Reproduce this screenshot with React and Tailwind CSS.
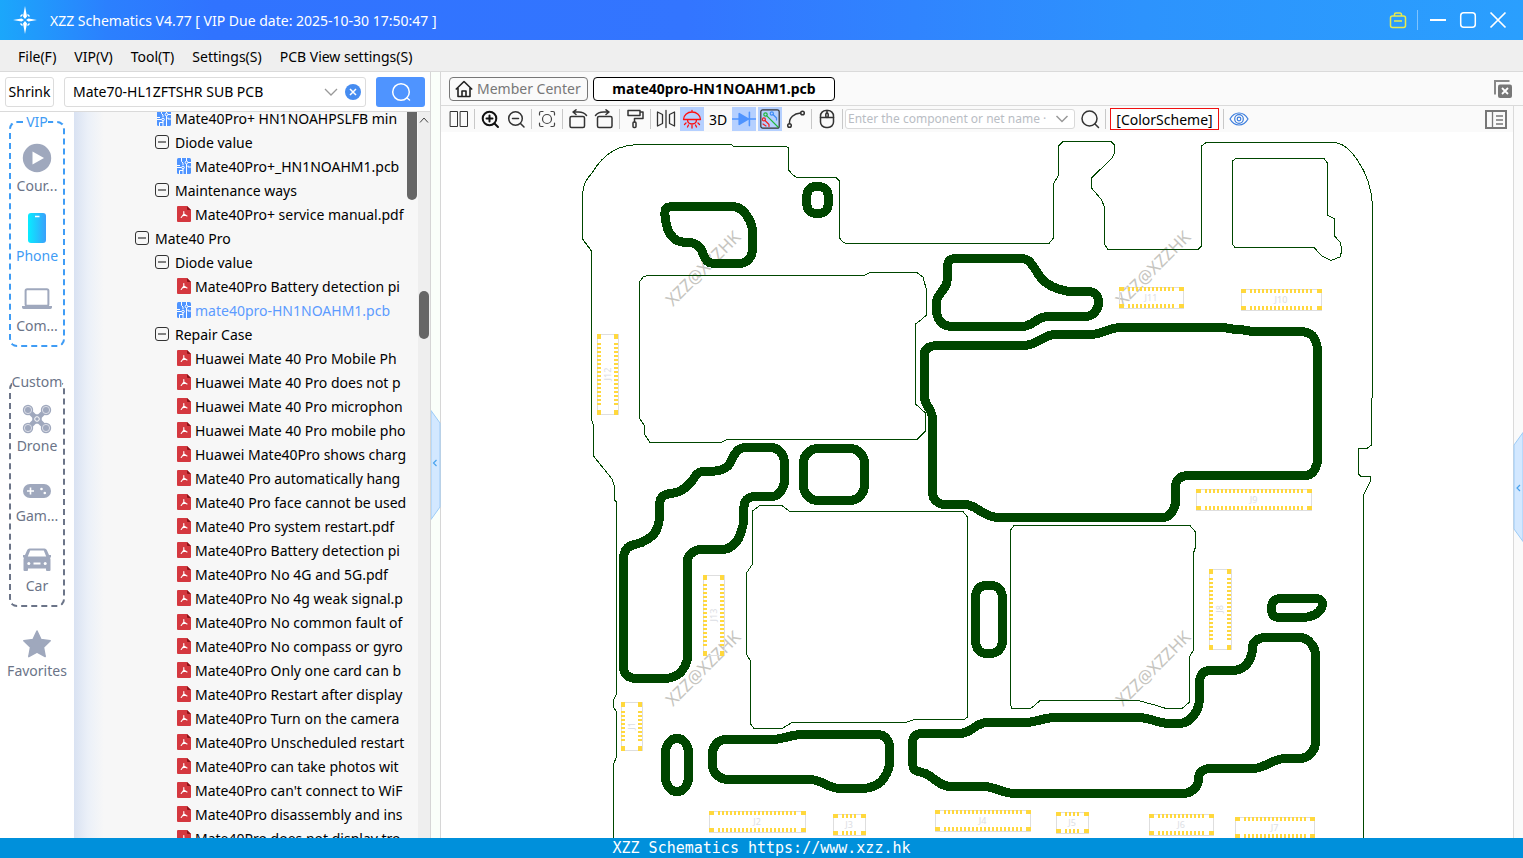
import React from "react";

const PCB_GREEN = "#004600";

const treeRows = [
  { kind: "pcb", level: 1, label: "Mate40Pro+ HN1NOAHPSLFB min" },
  { kind: "folder", level: 2, label: "Diode value" },
  { kind: "pcb", level: 3, label: "Mate40Pro+_HN1NOAHM1.pcb" },
  { kind: "folder", level: 2, label: "Maintenance ways" },
  { kind: "pdf", level: 3, label: "Mate40Pro+ service manual.pdf" },
  { kind: "folder", level: 1, label: "Mate40 Pro" },
  { kind: "folder", level: 2, label: "Diode value" },
  { kind: "pdf", level: 3, label: "Mate40Pro Battery detection pi" },
  { kind: "pcb", level: 3, label: "mate40pro-HN1NOAHM1.pcb", active: true },
  { kind: "folder", level: 2, label: "Repair Case" },
  { kind: "pdf", level: 3, label: "Huawei Mate 40 Pro Mobile Ph" },
  { kind: "pdf", level: 3, label: "Huawei Mate 40 Pro does not p" },
  { kind: "pdf", level: 3, label: "Huawei Mate 40 Pro microphon" },
  { kind: "pdf", level: 3, label: "Huawei Mate 40 Pro mobile pho" },
  { kind: "pdf", level: 3, label: "Huawei Mate40Pro shows charg" },
  { kind: "pdf", level: 3, label: "Mate40 Pro automatically hang" },
  { kind: "pdf", level: 3, label: "Mate40 Pro face cannot be used" },
  { kind: "pdf", level: 3, label: "Mate40 Pro system restart.pdf" },
  { kind: "pdf", level: 3, label: "Mate40Pro Battery detection pi" },
  { kind: "pdf", level: 3, label: "Mate40Pro No 4G and 5G.pdf" },
  { kind: "pdf", level: 3, label: "Mate40Pro No 4g weak signal.p" },
  { kind: "pdf", level: 3, label: "Mate40Pro No common fault of" },
  { kind: "pdf", level: 3, label: "Mate40Pro No compass or gyro" },
  { kind: "pdf", level: 3, label: "Mate40Pro Only one card can b" },
  { kind: "pdf", level: 3, label: "Mate40Pro Restart after display" },
  { kind: "pdf", level: 3, label: "Mate40Pro Turn on the camera" },
  { kind: "pdf", level: 3, label: "Mate40Pro Unscheduled restart" },
  { kind: "pdf", level: 3, label: "Mate40Pro can take photos wit" },
  { kind: "pdf", level: 3, label: "Mate40Pro can't connect to WiF" },
  { kind: "pdf", level: 3, label: "Mate40Pro disassembly and ins" },
  { kind: "pdf", level: 3, label: "Mate40Pro does not display tro" },
];

const indent = { "folder-1": "pl-[61px]", "folder-2": "pl-[81px]", "pcb-1": "pl-[83px]", "pcb-3": "pl-[103px]", "pdf-3": "pl-[103px]" };

function PdfIcon() {
  return (
    <svg width="14" height="16" viewBox="0 0 14 16" className="shrink-0">
      <path d="M1 0h9l4 4v11a1 1 0 0 1-1 1H1a1 1 0 0 1-1-1V1a1 1 0 0 1 1-1z" fill="#d4383f" />
      <path d="M10 0l4 4h-3a1 1 0 0 1-1-1z" fill="#8d1218" />
      <path d="M6.800 5.500v2.500L4.200 11.500M6.800 8l3.200 2M5.500 9.800l3.500-.6" fill="none" stroke="#fff" strokeWidth="1.100" strokeLinecap="round" />
    </svg>
  );
}

function PcbIcon() {
  return (
    <svg width="14" height="16" viewBox="0 0 14 16" className="shrink-0">
      <rect width="14" height="16" rx="1.500" fill="#4f94ff" />
      <g fill="none" stroke="#fff" strokeWidth="1">
        <path d="M4.500 0v3.500L6 5v2M0 7.500h3M4.500 9.500H0M6 11v5M9.500 6v10M11 7.500V9l3 0M9.500 0v3M6 12.500H2.500V16" />
        <circle cx="6" cy="9.500" r="1.300" />
        <circle cx="9.500" cy="4.500" r="1.300" />
        <path d="M11 4.500h3" />
      </g>
    </svg>
  );
}

function MinusBox() {
  return (
    <svg width="14" height="14" viewBox="0 0 14 14" className="shrink-0" fill="none" stroke="#333">
      <rect x=".5" y=".5" width="13" height="13" rx="2.500" />
      <path d="M3 7h8" strokeWidth="1.200" />
    </svg>
  );
}

function TreeRow({ row }) {
  const icon = row.kind === "pdf" ? <PdfIcon /> : row.kind === "pcb" ? <PcbIcon /> : <MinusBox />;
  return (
    <li className={`flex h-6 items-center whitespace-nowrap ${row.kind === "folder" ? "gap-[6px]" : "gap-1"} ${indent[`${row.kind}-${row.level}`]} ${row.active ? "text-[#5c9bff]" : "text-black"}`}>
      {icon}
      <span>{row.label}</span>
    </li>
  );
}

const sideIcons = {
  course: (
    <svg width="30" height="30" viewBox="0 0 30 30">
      <circle cx="15" cy="15" r="14.200" fill="#9fa8bd" />
      <path d="M10.500 8.500v13L22 15z" fill="#fff" />
    </svg>
  ),
  phone: (
    <svg width="30" height="30" viewBox="0 0 30 30">
      <defs>
        <linearGradient id="phoneFill" x1="0" y1="0" x2="1" y2="0">
          <stop offset="0" stopColor="#08ecff" />
          <stop offset="1" stopColor="#3aa0fb" />
        </linearGradient>
      </defs>
      <rect x="6" y="0" width="18" height="30" rx="3" fill="url(#phoneFill)" />
      <path d="M13 3.500h4.500" stroke="#fff" strokeWidth="1.500" />
    </svg>
  ),
  computer: (
    <svg width="30" height="30" viewBox="0 0 30 30">
      <rect x="3.600" y="6.300" width="22.800" height="16.500" rx="1.500" fill="none" stroke="#9fa8bd" strokeWidth="2" />
      <path d="M0 23h30v1.500a2 2 0 0 1-2 1.500H2A2 2 0 0 1 0 24.500z" fill="#9fa8bd" />
    </svg>
  ),
  drone: (
    <svg width="30" height="32" viewBox="0 -1 30 32" className="-mb-[2px]">
      <path d="M6 6l18 18M24 6L6 24" stroke="#9fa8bd" strokeWidth="5" />
      {[[6, 6], [24, 6], [6, 24], [24, 24]].map(([x, y]) => (
        <g key={`${x}-${y}`}>
          <circle cx={x} cy={y} r="5.200" fill="#9fa8bd" />
          <circle cx={x} cy={y} r="3.600" fill="none" stroke="#e8eaf0" strokeWidth=".8" />
        </g>
      ))}
      <circle cx="15" cy="15" r="4.800" fill="#9fa8bd" />
      <circle cx="15" cy="15" r="2.300" fill="none" stroke="#fff" strokeWidth="1" />
    </svg>
  ),
  game: (
    <svg width="30" height="30" viewBox="0 -3 30 30">
      <rect x="1" y="8" width="28" height="14" rx="7" fill="#9fa8bd" />
      <path d="M8.500 11.500v7M5 15h7" stroke="#fff" strokeWidth="1.600" />
      <circle cx="19.500" cy="13" r="1.300" fill="#fff" />
      <circle cx="22.800" cy="17" r="1.300" fill="#fff" />
    </svg>
  ),
  car: (
    <svg width="30" height="30" viewBox="0 -2 30 30">
      <path d="M7.500 3.500h15a2.500 2.500 0 0 1 2.300 1.600L27 10h2v2.500h-1l.5 2V25a1 1 0 0 1-1 1h-2.500a1 1 0 0 1-1-1v-1.500H6V25a1 1 0 0 1-1 1H2.500a1 1 0 0 1-1-1V14.500l.5-2H1V10h2l2.200-4.900A2.500 2.500 0 0 1 7.500 3.500z" fill="#9fa8bd" />
      <path d="M8.200 5.500h13.600l2.400 6H5.800z" fill="#fff" />
      <circle cx="6.800" cy="18.500" r="1.500" fill="#fff" />
      <circle cx="23.200" cy="18.500" r="1.500" fill="#fff" />
      <path d="M11.500 18.500h7" stroke="#fff" strokeWidth="2" />
    </svg>
  ),
  star: (
    <svg width="30" height="30" viewBox="0 -1 30 30">
      <path d="M15 2l4 8.600 9.200 1.200-6.700 6.500 1.700 9.300L15 23.200 6.800 27.600l1.700-9.300-6.700-6.500 9.200-1.200z" fill="#9fa8bd" stroke="#9fa8bd" strokeWidth="1.500" strokeLinejoin="round" />
    </svg>
  ),
};

function SideItem({ icon, label, active }) {
  return (
    <button className={`flex h-[70px] w-full flex-col items-center gap-[3px] leading-5 ${active ? "text-[#3f9cf5]" : "text-[#6b7488]"}`}>
      {sideIcons[icon]}
      <span className="whitespace-nowrap">{label}</span>
    </button>
  );
}

function SideGroup({ title, color, children }) {
  return (
    <section className={`relative mx-[9px] h-[226px] rounded-lg border-2 border-dashed pt-[20px] ${color}`}>
      <h2 className="absolute inset-x-0 top-[-11px] flex justify-center leading-5">
        <span className="bg-white">{title}</span>
      </h2>
      {children}
    </section>
  );
}

function Sep() {
  return <span className="mx-[2px] h-5 w-px shrink-0 bg-[#c8c8c8]" />;
}

function Tool({ label, on, children }) {
  return (
    <button aria-label={label} className={`mx-px flex size-6 shrink-0 items-center justify-center ${on ? "bg-[#b5d0ff]" : ""}`}>
      {children}
    </button>
  );
}

function Icon({ children, size = 20, stroke = "#333", width = 1.5 }) {
  return (
    <svg width={size} height={size} viewBox="0 0 20 20" fill="none" stroke={stroke} strokeWidth={width} strokeLinecap="round" strokeLinejoin="round" className="shrink-0">
      {children}
    </svg>
  );
}

function Toolbar() {
  return (
    <div className="flex h-[26px] shrink-0 items-center bg-[#fafafa] pl-[5px]">
      <Tool label="Split view"><Icon width={1}><path d="M1.500 2.500h7v15h-7zM11.500 2.500h7v15h-7z" strokeLinejoin="miter" /></Icon></Tool>
      <Sep />
      <Tool label="Zoom in"><Icon stroke="#111" width={2}><circle cx="9.500" cy="9.500" r="6.800" /><path d="M14.500 14.500l3.500 3.500M6.500 9.500h6M9.500 6.500v6" /></Icon></Tool>
      <Tool label="Zoom out"><Icon><circle cx="9.500" cy="9.500" r="6.800" /><path d="M14.500 14.500l3.500 3.500M6.500 9.500h6" /></Icon></Tool>
      <Sep />
      <Tool label="Fit to window"><Icon width={1.200} stroke="#444"><circle cx="10" cy="10" r="4.500" /><path d="M2.500 6V4a1.500 1.500 0 0 1 1.500-1.500h2M14 2.500h2A1.500 1.500 0 0 1 17.500 4v2M17.500 14v2a1.500 1.500 0 0 1-1.500 1.500h-2M6 17.500H4A1.500 1.500 0 0 1 2.500 16v-2" /></Icon></Tool>
      <Sep />
      <Tool label="Rotate right"><Icon><rect x="2" y="7.500" width="14.500" height="11" rx="1.500" /><path d="M5 3h5.500Q16 3 18.500 6.500M8 .8L5 3 8 5.500" /></Icon></Tool>
      <Tool label="Rotate left"><Icon><rect x="3.500" y="7.500" width="14.500" height="11" rx="1.500" /><path d="M15 3H9.500Q4 3 1.500 6.500M12 .8L15 3l-3 2.500" /></Icon></Tool>
      <Sep />
      <Tool label="Paint"><Icon><path d="M3 1.500h12v5H3zM15 3h3v6.500H9.500v3.500" /><rect x="8" y="13" width="3" height="5.500" rx="1" /></Icon></Tool>
      <Sep />
      <Tool label="Mirror"><Icon width={1.300}><path d="M10 1.500v17M1.500 3v14l5-2.500v-9zM18.500 3v14l-5-2.500v-9z" /></Icon></Tool>
      <Tool label="Lamp" on><Icon stroke="#ff1010" width={1.300}><path d="M1.500 10.500a8.500 7.500 0 0 1 17 0zM10 3V1.500M5.500 10.500c0 3 2 4.500 4.500 4.500s4.500-1.500 4.500-4.500M4 14l-1.500 1.500M6.500 16l-1 2M10 16.500V19M13.500 16l1 2M16 14l1.500 1.500" /></Icon></Tool>
      <button className="mx-px flex h-6 w-6 shrink-0 items-center justify-center">3D</button>
      <Tool label="Diode" on><Icon size={24} stroke="#4f94ff" width={1.300}><path d="M0 10h20" /><path d="M6 5.500v9l7.500-4.500z" fill="#4f94ff" /><path d="M14.500 4.500v11" /></Icon></Tool>
      <Tool label="Net" on>
        <Icon width={1.200}>
          <rect x=".8" y=".8" width="18.400" height="18.400" rx="2" />
          <path d="M6.800 6.800L18 18" stroke="#22b83a" /><circle cx="5.500" cy="5.500" r="1.700" stroke="#22b83a" />
          <path d="M13 5.500l3.500 3.500v2" stroke="#3f8df5" /><circle cx="11.800" cy="4.500" r="1.600" stroke="#3f8df5" />
          <path d="M5 11.500l4 4v2" stroke="#f02020" /><circle cx="3.900" cy="10.400" r="1.500" stroke="#f02020" /><path d="M3 15l3 2" stroke="#f02020" />
        </Icon>
      </Tool>
      <Tool label="Curve"><Icon><circle cx="3.500" cy="16.500" r="1.800" /><circle cx="16.500" cy="4" r="1.800" /><path d="M3.500 14.500C3 8.500 8 4.500 14.500 4" /></Icon></Tool>
      <Sep />
      <Tool label="Mouse"><Icon><rect x="3.500" y="1.500" width="13" height="17" rx="5.500" /><path d="M3.500 8.500h13M10 1.500v3" /><rect x="8.800" y="4" width="2.400" height="4.500" rx="1.200" /></Icon></Tool>
      <Sep />
      <div className="flex h-5 w-[230px] shrink-0 items-center rounded-[3px] border border-[#d9d9d9] bg-white pr-[5px]">
        <input aria-label="Component or net name" placeholder="Enter the component or net name ·" className="min-w-0 flex-1 pl-[2px] text-[12px] outline-none placeholder:text-[#b9bdc4]" />
        <svg width="14" height="8" viewBox="0 0 14 8" fill="none" stroke="#999" strokeWidth="1.500"><path d="M1.500 1L7 6.500 12.500 1" /></svg>
      </div>
      <span className="ml-[2px]"><Tool label="Search"><Icon><circle cx="9.500" cy="9.500" r="7.500" /><path d="M15 15l3.500 3.500" /></Icon></Tool></span>
      <Sep />
      <button className="mx-[2px] flex h-[22px] w-[109px] shrink-0 items-center justify-center border border-[#f01010] bg-white">[ColorScheme]</button>
      <Sep />
      <Tool label="Visibility"><Icon stroke="#3b7ddd" width={1.200}><path d="M1 10c4.500-8 13.500-8 18 0-4.500 8-13.500 8-18 0z" /><circle cx="10" cy="10" r="4.300" /><circle cx="10" cy="10" r="1.800" /></Icon></Tool>
      <button aria-label="Toggle side panel" className="ml-auto mr-[6px]">
        <svg width="22" height="19" viewBox="0 0 22 19" fill="none" stroke="#777">
          <rect x="1" y="1" width="20" height="17" strokeWidth="2" />
          <path d="M7.500 1v17M11 6h7M11 10h7M11 14h7" strokeWidth="1.300" />
        </svg>
      </button>
    </div>
  );
}

const thinPaths = [
  "M613.500 838V764L616.500 757V712L613.500 707V700L616.500 694V502L614.500 500V486L612 479L593.500 456V425L591.500 420V251L582.500 239V195Q583 182 592 173Q601 158 613 151Q624 144.500 642 144.500H731L734 146.500H786L788.500 148V170L793 175L797 177.500H836L839.500 181V238L843 242L846 243.500H1049L1053.500 238V184L1058.500 175V146L1063 141.500H1111L1114.500 145V153L1112 158L1091.500 178V188L1101 199L1104.500 207V244L1108 249.500H1198L1201.500 246V146L1206 142.500H1336Q1348 145 1358 161Q1371 180 1372.500 205V396L1371.500 400V445L1367 448.500L1358.500 448.500V474L1361 476.500H1370L1371 480L1363.500 495V838",
  "M1236 158.500H1324L1327.500 163V215L1334.500 219V236L1340 242L1342 250L1340 257L1331 260.500L1322 256L1314 247.500H1235L1232.500 244V161Z",
  "M639.500 282L643 277L648 275.500H864L870 272.500H917L923 277L926.500 290V315L922 319L915.500 324V404L925.500 413V431L917 439.500H727L721 442.500H650L645 435L644.500 426L639.500 418Z",
  "M752.500 511L760 505.500H782L790 511.500H963L967.500 517V717L964 719.500H914L906 722.500H792L782 728.500H754L750.500 724V661L746.500 654V573L752.500 564Z",
  "M1010.500 530L1014 525.500H1190L1195.500 532V547L1193.500 553V650L1189.500 657V702L1182 708.500H1166L1155 705L1138 700.500H1040L1034 706L1030 708.500H1012L1010.500 705Z",
];

const thickLoops = [
  [[664.5, 210], [668, 206.5], [737, 206.5], [745, 212], [752.5, 226], [752.5, 253], [749, 260], [743, 263.5], [709, 263.5], [704, 257], [701, 248], [694, 242.5], [678, 242], [669, 234], [665.5, 221]],
  [[947.5, 263], [951, 258.5], [1027, 258.5], [1034, 267], [1041, 279], [1052, 287], [1067, 291.5], [1093, 291.5], [1098.5, 297], [1098.5, 308], [1091, 316.5], [1043, 316.5], [1027, 326.5], [947, 326.5], [940, 322], [936.5, 315], [936.5, 300], [939, 295], [946, 286], [947.5, 280]],
  [[924, 350], [932, 345.5], [1027, 345.5], [1035, 343], [1050, 334.5], [1095, 334.5], [1116, 327.5], [1226, 327.5], [1236, 330], [1240, 329], [1250, 331.5], [1305, 331.5], [1313, 335], [1317.5, 345], [1317.5, 465], [1311, 475.5], [1183, 475.5], [1177, 480], [1175.5, 485], [1175.5, 507], [1168, 517.5], [994, 517.5], [985, 514], [970, 504.5], [940, 504.5], [932.5, 498], [932.5, 414], [924, 400]],
  [[733, 456], [740, 447.5], [777, 447.5], [784.5, 457], [784.5, 486], [777, 496.5], [750, 496.5], [744, 502], [743.5, 525], [738, 541], [728, 549.5], [696, 549.5], [688, 556], [687.5, 562], [687.5, 662], [680, 674], [670, 678.5], [631, 678.5], [623.5, 673], [623.5, 553], [629, 545.5], [642, 543], [655, 534], [659.5, 522], [659.5, 500], [664, 494.5], [680, 492], [691, 483], [698, 471.5], [720, 471], [729, 466]],
  [[712.5, 748], [720, 739.5], [777, 739.5], [797, 734.5], [883, 734.5], [889.5, 742], [889.5, 768], [882, 782], [869, 788.5], [835, 788.5], [815, 779.5], [722, 779.5], [712.5, 771]],
  [[912.5, 738], [917, 733.5], [965, 733.5], [982, 722.5], [1030, 722.5], [1050, 717.5], [1143, 717.5], [1165, 723.5], [1185, 723.5], [1194, 716], [1199.5, 705], [1199.5, 677], [1205, 670.5], [1238, 670.5], [1247, 665], [1252.5, 654], [1252.5, 643], [1260, 637.5], [1306, 637.5], [1315.5, 649], [1315.5, 748], [1306, 758.5], [1280, 758.5], [1258, 768.5], [1205, 768.5], [1198.5, 774], [1198.5, 785], [1189, 793.5], [1010, 793.5], [988, 786.5], [945, 786.5], [935, 780], [926, 773], [915, 771], [912.5, 766]],
  [[1271.5, 603], [1276, 598.5], [1320, 598.5], [1323.5, 604], [1319, 613], [1308, 617.5], [1275, 617.5], [1271.5, 613]],
  [[811, 186.5], [824, 186.5], [828.5, 193], [828.5, 207], [824, 213.5], [811, 213.5], [806.5, 207], [806.5, 193]],
  [[812, 448.5], [856, 448.5], [864.5, 457], [864.5, 491], [856, 500.5], [812, 500.5], [803.5, 492], [803.5, 457]],
  [[672, 738.5], [682, 738.5], [688.5, 747], [688.5, 783], [682, 791.5], [672, 791.5], [665.5, 783], [665.5, 747]],
  [[981, 585.5], [997, 585.5], [1002.5, 593], [1002.5, 646], [996, 653.5], [981, 653.5], [975.5, 646], [975.5, 592]],
];

// Closed path through the points, with every corner eased by a short curve.
function smoothLoop(points, radius = 6) {
  const towards = (a, b) => {
    const len = Math.hypot(b[0] - a[0], b[1] - a[1]);
    const t = Math.min(radius, len / 2) / len;
    return [a[0] + (b[0] - a[0]) * t, a[1] + (b[1] - a[1]) * t];
  };
  return (
    points
      .map((p, i) => {
        const prev = points[(i + points.length - 1) % points.length];
        const next = points[(i + 1) % points.length];
        const [ax, ay] = towards(p, prev);
        const [bx, by] = towards(p, next);
        return `${i ? "L" : "M"}${ax} ${ay}Q${p[0]} ${p[1]} ${bx} ${by}`;
      })
      .join("") + "Z"
  );
}

const connectors = [
  { id: "J12", x: 597, y: 334, w: 21, h: 80 },
  { id: "J13", x: 703, y: 575, w: 21, h: 80 },
  { id: "J1", x: 621, y: 702, w: 21, h: 48 },
  { id: "J8", x: 1209, y: 569, w: 22, h: 80 },
  { id: "J11", x: 1119, y: 287, w: 64, h: 21 },
  { id: "J10", x: 1241, y: 289, w: 80, h: 21 },
  { id: "J9", x: 1196, y: 489, w: 115, h: 21 },
  { id: "J2", x: 709, y: 811, w: 96, h: 21 },
  { id: "J3", x: 833, y: 814, w: 32, h: 21 },
  { id: "J4", x: 935, y: 810, w: 95, h: 21 },
  { id: "J5", x: 1056, y: 812, w: 32, h: 21 },
  { id: "J6", x: 1149, y: 814, w: 64, h: 21 },
  { id: "J7", x: 1235, y: 817, w: 79, h: 21 },
];

function Connector({ id, x, y, w, h }) {
  const vertical = h > w;
  const len = vertical ? h : w;
  const depth = vertical ? w : h;
  const count = Math.round((len - 17) / 4);
  const spans = [[0, 5], ...Array.from({ length: count }, (_, i) => [9 + i * 4, 2]), [len - 4, 5]];
  const cx = x + w / 2;
  const cy = y + h / 2;
  return (
    <g>
      <rect x={x + 0.5} y={y + 0.5} width={w} height={h} fill="none" stroke="#dedede" />
      {spans.flatMap(([at, size]) =>
        [0, depth - 4].map((off) => (
          <rect key={`${at}-${off}`} x={x + (vertical ? off : at)} y={y + (vertical ? at : off)} width={vertical ? 4 : size} height={vertical ? size : 4} fill="#ffd83d" shapeRendering="crispEdges" />
        ))
      )}
      <text x={cx} y={cy + 3} textAnchor="middle" fontSize="9" fill="#dcdee4" transform={vertical ? `rotate(-90 ${cx} ${cy})` : undefined}>{id}</text>
    </g>
  );
}

function Board() {
  return (
    <svg viewBox="441 132 1072 706" preserveAspectRatio="xMidYMin meet" className="block h-full w-full" role="img" aria-label="Board outline">
      {[[673, 307], [1123, 307], [673, 707], [1123, 707]].map(([x, y]) => (
        <text key={`${x}-${y}`} x={x} y={y} fontSize="17" fill="#c6c5c0" transform={`rotate(-45 ${x} ${y})`}>XZZ@XZZHK</text>
      ))}
      {connectors.map((c) => <Connector key={c.id} {...c} />)}
      <g fill="none" stroke={PCB_GREEN} shapeRendering="crispEdges">
        {thinPaths.map((d) => <path key={d} d={d} />)}
        <g strokeWidth="9" strokeLinejoin="round">
          {thickLoops.map((points, i) => <path key={i} d={smoothLoop(points)} />)}
        </g>
      </g>
    </svg>
  );
}

function Handle({ flip }) {
  return (
    <button aria-label="Collapse panel" className={`absolute ${flip ? "right-0 top-[326px]" : "left-0 top-[338px]"}`}>
      <svg width="10" height="110" viewBox="0 0 10 110">
        <path d={flip ? "M10 .5L1 13v84l9 12.500z" : "M0 .5L9 13v84L0 109.500z"} fill="#d3e8ff" stroke="#9ccbf7" />
        <path d={flip ? "M7 53l-3 3 3 3" : "M5.500 50l-3 3 3 3"} fill="none" stroke="#4aa3ee" strokeWidth="1.200" />
      </svg>
    </button>
  );
}

export default function App() {
  return (
    <div className="flex h-screen flex-col overflow-hidden bg-white font-['Noto_Sans','Open_Sans',sans-serif] text-[14px] text-black">
      <header className="flex h-10 shrink-0 items-center bg-[linear-gradient(90deg,#1ba7fb_0%,#2b80fe_7%,#3073ff_14%,#3375ff_45%,#2d93fd_75%,#2a9ffe_100%)] pl-3 pr-4 text-white">
        <svg width="26" height="30" viewBox="0 0 26 30" className="mr-3">
          <path d="M13 1l2 10.500L13 14l-2-2.500zM13 29l2-10.500L13 16l-2 2.500zM1 15l8.500-1.500L12 15l-2.500 1.500zM25 15l-8.500-1.500L14 15l2.500 1.500z" fill="#fff" />
          <path d="M8.500 11.500l2-2M17.500 11.500l-2-2M8.500 18.500l2 2M17.500 18.500l-2 2" stroke="#fff" strokeWidth="1.400" />
        </svg>
        <h1>XZZ Schematics V4.77 [ VIP Due date: 2025-10-30 17:50:47 ]</h1>
        <div className="ml-auto flex items-center">
          <button aria-label="Toolbox">
            <svg width="18" height="18" viewBox="0 0 18 18" fill="none" stroke="#e9ec4c" strokeWidth="1.500">
              <rect x="1.500" y="5" width="15" height="11.500" rx="2" />
              <path d="M5.500 5V3.500a1.500 1.500 0 0 1 1.500-1.500h4a1.500 1.500 0 0 1 1.500 1.500V5M5 10h8" />
            </svg>
          </button>
          <span className="ml-[10px] mr-[11px] h-5 w-px bg-white/40" />
          <div className="flex gap-3">
            <button aria-label="Minimize"><svg width="18" height="18" viewBox="0 0 18 18"><path d="M1 9h16" stroke="#fff" strokeWidth="2" /></svg></button>
            <button aria-label="Maximize"><svg width="18" height="18" viewBox="0 0 18 18"><rect x="1.700" y="1.700" width="14.600" height="14.600" rx="3" fill="none" stroke="#fff" strokeWidth="1.500" /></svg></button>
            <button aria-label="Close"><svg width="18" height="18" viewBox="0 0 18 18"><path d="M1.500 1.500l15 15M16.500 1.500l-15 15" stroke="#fff" strokeWidth="1.700" /></svg></button>
          </div>
        </div>
      </header>

      <nav className="flex h-8 shrink-0 items-center gap-[18px] border-b border-[#dadada] bg-[#efefef] pl-[18px] pt-px">
        {["File(F)", "VIP(V)", "Tool(T)", "Settings(S)", "PCB View settings(S)"].map((m) => <button key={m}>{m}</button>)}
      </nav>

      <div className="flex min-h-0 flex-1">
        <aside className="flex w-[431px] shrink-0 flex-col border-r border-[#d6d6d6]">
          <div className="flex h-10 shrink-0 items-center border-b border-[#dadada] px-[5px]">
            <button className="h-[30px] w-[49px] rounded-[3px] border border-[#dcdcdc] bg-white">Shrink</button>
            <div className="ml-[10px] flex h-[30px] flex-1 items-center rounded-[3px] border border-[#dcdcdc] pl-2 pr-1">
              <input aria-label="Search files" defaultValue="Mate70-HL1ZFTSHR SUB PCB" className="min-w-0 flex-1 outline-none" />
              <svg width="14" height="8" viewBox="0 0 14 8" fill="none" stroke="#999" strokeWidth="1.300"><path d="M1 1l6 6 6-6" /></svg>
              <button aria-label="Clear" className="ml-[7px]">
                <svg width="16" height="16" viewBox="0 0 16 16"><circle cx="8" cy="8" r="8" fill="#468cf0" /><path d="M5 5l6 6M11 5l-6 6" stroke="#fff" strokeWidth="1.500" /></svg>
              </button>
            </div>
            <button aria-label="Search" className="ml-[10px] flex h-[30px] w-[49px] items-center justify-center rounded-[3px] bg-[#4f94ff]">
              <Icon stroke="#fff"><circle cx="10" cy="10" r="8.300" /><path d="M16 16l2.500 2" /></Icon>
            </button>
          </div>
          <div className="flex min-h-0 flex-1">
            <div className="flex w-[74px] shrink-0 flex-col bg-white pt-[9px]">
              <SideGroup title="VIP" color="border-[#3f9cf5] text-[#3f9cf5]">
                <SideItem icon="course" label="Cour..." />
                <SideItem icon="phone" label="Phone" active />
                <SideItem icon="computer" label="Com..." />
              </SideGroup>
              <div className="mt-[34px]">
                <SideGroup title="Custom" color="border-[#6b7488] text-[#6b7488]">
                  <SideItem icon="drone" label="Drone" />
                  <SideItem icon="game" label="Gam..." />
                  <SideItem icon="car" label="Car" />
                </SideGroup>
              </div>
              <div className="mt-[21px]"><SideItem icon="star" label="Favorites" /></div>
            </div>
            <div className="flex min-w-0 flex-1 overflow-hidden bg-[linear-gradient(90deg,#d9e2f2_0px,#ebf0f8_14px,#f7f7f7_30px)]">
              <ul className="-mt-[6px] w-[332px] shrink-0 overflow-hidden">
                {treeRows.map((row, i) => <TreeRow key={i} row={row} />)}
              </ul>
              <span className="ml-px h-[88px] w-[10px] shrink-0 rounded-b-[5px] bg-[#666]" />
            </div>
            <div className="flex w-3 shrink-0 flex-col items-center bg-[#eeeeee] pt-[5px]">
              <svg width="10" height="6" viewBox="0 0 10 6" fill="none" stroke="#444"><path d="M1 5.500l4-4.500 4 4.500" /></svg>
              <span className="mt-[168px] h-12 w-[10px] shrink-0 rounded-[5px] bg-[#666]" />
            </div>
          </div>
        </aside>

        <div className="relative w-[10px] shrink-0 border-r border-[#d6d6d6] bg-[#fafffa]"><Handle /></div>

        <main className="flex min-w-0 flex-1 flex-col">
          <div className="flex h-[34px] shrink-0 items-center gap-[5px] border-b border-[#dadada] bg-[#fafafa] pl-2 pr-[10px]">
            <button className="flex h-6 w-[139px] items-center gap-1 rounded-[4px] border border-[#777] pl-[5px] text-[#777]">
              <svg width="18" height="18" viewBox="0 0 18 18" fill="none" stroke="#222" strokeWidth="1.600" strokeLinejoin="round"><path d="M.8 9.500L9 1.500l8.200 8M3 8v8.500h12V8" /><path d="M7 16v-5h4v5" /></svg>
              Member Center
            </button>
            <button className="h-6 w-[242px] rounded-[4px] border border-black bg-white font-bold">mate40pro-HN1NOAHM1.pcb</button>
            <button aria-label="Close all tabs" className="ml-auto">
              <svg width="20" height="20" viewBox="0 0 20 20" fill="none">
                <path d="M2 15.500V2h14.500" stroke="#888" strokeWidth="2" />
                <rect x="5" y="5.500" width="14" height="13.500" rx="2" fill="#777" />
                <path d="M9 9l6 6M15 9l-6 6" stroke="#fff" strokeWidth="1.800" />
              </svg>
            </button>
          </div>
          <div className="flex min-h-0 flex-1">
            <div className="flex min-w-0 flex-1 flex-col border-r border-[#dadada]">
              <Toolbar />
              <div className="min-h-0 flex-1"><Board /></div>
            </div>
            <div className="relative w-[9px] shrink-0 bg-[#fafafa]"><Handle flip /></div>
          </div>
        </main>
      </div>

      <footer className="flex h-5 shrink-0 items-center justify-center bg-[#0090db] font-['DejaVu_Sans_Mono',monospace] text-[15px] text-white">
        XZZ Schematics https://www.xzz.hk
      </footer>
    </div>
  );
}
